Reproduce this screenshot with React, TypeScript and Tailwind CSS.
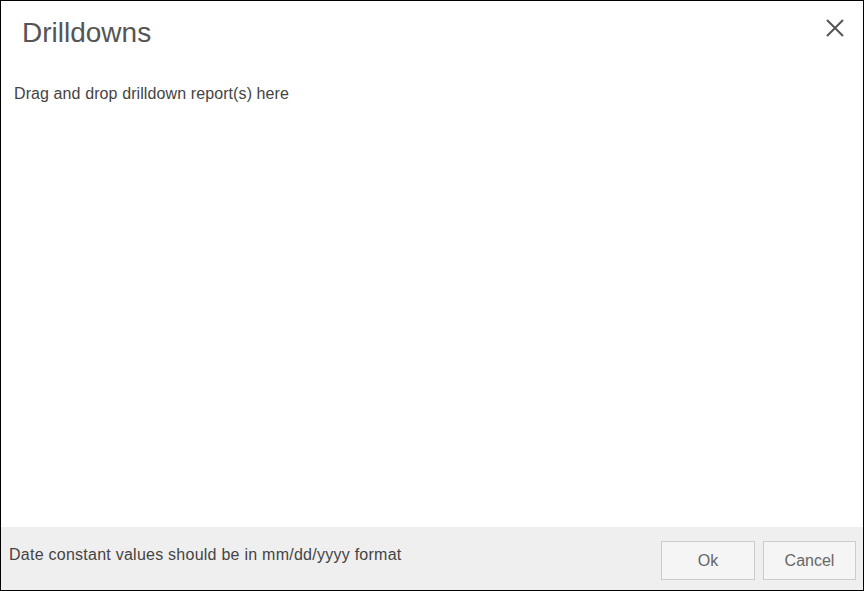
import React from "react";

export default function App() {
  return (
    <div
      className="w-[864px] h-[591px] border border-black bg-white flex flex-col text-[#555555]"
      style={{ fontFamily: '"Liberation Sans", Arial, sans-serif' }}
    >
      <div className="flex items-start justify-between pl-[21px] pr-[18px] pt-[15px]">
        <h1 className="text-[28px] leading-[34px] font-normal text-[#555555]">Drilldowns</h1>
        <button className="mt-[2px] w-[20px] h-[20px] flex items-center justify-center" aria-label="Close">
          <svg width="20" height="20" viewBox="0 0 20 20">
            <path d="M2 2 L18 18 M18 2 L2 18" stroke="#555555" strokeWidth="2" fill="none" />
          </svg>
        </button>
      </div>
      <div className="flex-1 pl-[13px] pt-[35px]">
        <p className="text-[16px] leading-[18px] tracking-[0.1px] text-[#444444]">Drag and drop drilldown report(s) here</p>
      </div>
      <div className="h-[63px] bg-[#efefef] flex items-start justify-between pl-[8px] pr-[7px] pt-[14px]">
        <p className="text-[16px] leading-[18px] tracking-[0.25px] text-[#444444] mt-[5px]">
          Date constant values should be in mm/dd/yyyy format
        </p>
        <div className="flex gap-[8px]">
          <button className="w-[94px] h-[39px] bg-[#f5f5f5] border border-[#cccccc] text-[16px] text-[#666666]">
            Ok
          </button>
          <button className="w-[93px] h-[39px] bg-[#f5f5f5] border border-[#cccccc] text-[16px] text-[#666666]">
            Cancel
          </button>
        </div>
      </div>
    </div>
  );
}
